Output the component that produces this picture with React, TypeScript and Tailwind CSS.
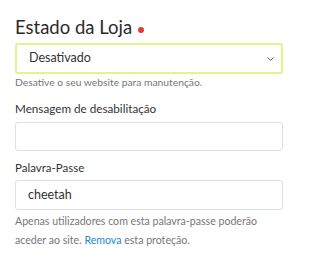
import React from "react";

export default function App() {
  return (
    <div className="w-[300px] h-[266px] bg-white pl-[15px] pr-[17px] pt-[16px] text-[#333]" style={{ fontFamily: "Lato, 'Open Sans', sans-serif" }}>
      <div className="flex items-center gap-[6px] text-[18.5px] leading-[22px] text-[#2b2b2b]">
        <span>Estado da Loja</span>
        <span className="w-[6px] h-[6px] rounded-full bg-[#e0393e] mt-[5px]" />
      </div>
      <div className="mt-[5px] h-[31px] border-2 border-[#e3f58a] rounded-[3px] flex items-center justify-between pl-[12px] pr-[6px] text-[12.5px] text-[#333]">
        <span>Desativado</span>
        <svg width="9" height="6" viewBox="0 0 9 6" className="text-[#666]">
          <path d="M1.5 1.5l3 3 3-3" fill="none" stroke="currentColor" strokeWidth="1" />
        </svg>
      </div>
      <div className="mt-0 text-[10.3px] leading-[16px] text-[#777]">Desative o seu website para manutenção.</div>
      <div className="mt-[10px] text-[11.7px] leading-[16px] text-[#333]">Mensagem de desabilitação</div>
      <div className="mt-[6px] h-[29px] border border-[#dcdfe3] rounded-[3px]" />
      <div className="mt-[9px] text-[11.5px] leading-[16px] text-[#333]">Palavra-Passe</div>
      <div className="mt-[4px] h-[30px] border border-[#dcdfe3] rounded-[3px] flex items-center pl-[12px] text-[12.5px] text-[#333]">cheetah</div>
      <div className="mt-[2px] text-[10.6px] leading-[19px] text-[#777]">
        Apenas utilizadores com esta palavra-passe poderão<br />aceder ao site. <span className="text-[#1d88d0]">Remova</span> esta proteção.
      </div>
    </div>
  );
}
